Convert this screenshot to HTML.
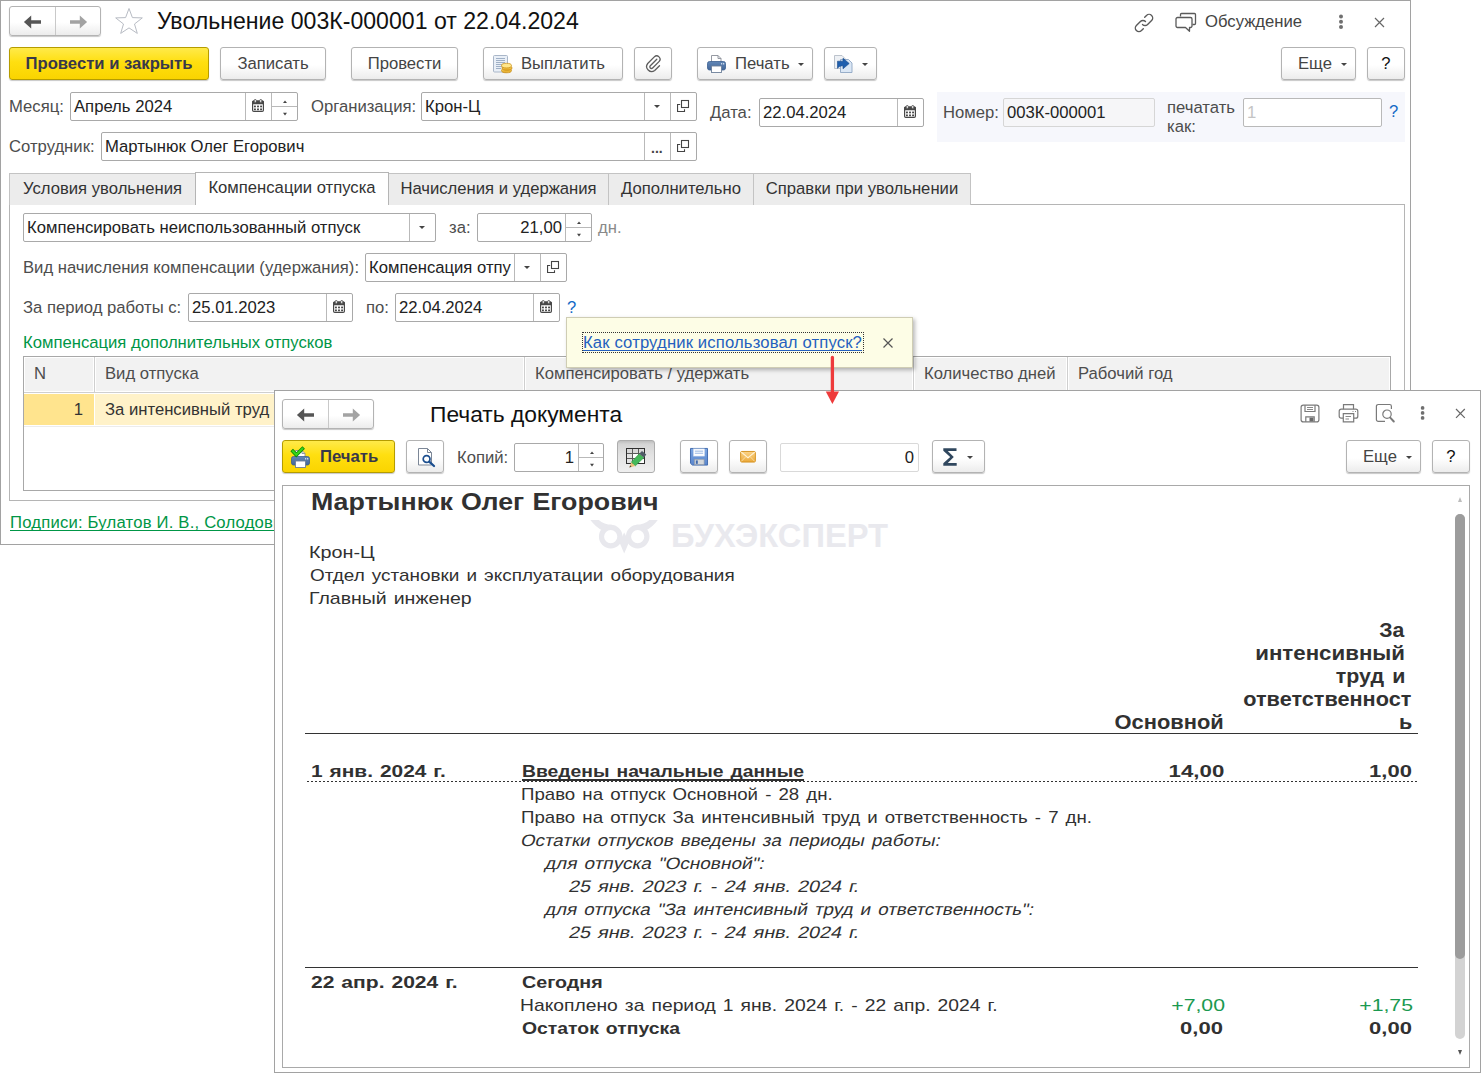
<!DOCTYPE html>
<html lang="ru">
<head>
<meta charset="utf-8">
<title>Увольнение</title>
<style>
*{box-sizing:border-box;margin:0;padding:0}
html,body{width:1481px;height:1073px;overflow:hidden;background:#fff}
body{font-family:"Liberation Sans",sans-serif;font-size:16.67px;color:#333;position:relative}
.a{position:absolute;white-space:nowrap}
.win{position:absolute;background:#fff;border:1px solid #a2a2a2}
.btn{position:absolute;height:33px;border:1px solid #b3b3b3;border-radius:3px;background:linear-gradient(#ffffff 0%,#ffffff 55%,#ececec 100%);box-shadow:0 1px 1px rgba(0,0,0,.22);color:#444;font-size:16.67px;line-height:31px;text-align:center;white-space:nowrap}
.ybtn{background:linear-gradient(#ffea4a 0%,#ffdf10 45%,#fad400 100%);border-color:#b59c00;font-weight:bold;color:#38384a}
.inp{position:absolute;height:29px;border:1px solid #a9a9a9;border-radius:2px;background:#fff;font-size:16.67px;line-height:27px;color:#222;white-space:nowrap;overflow:hidden}
.inp .t{position:absolute;left:3px;top:0}
.inp .r{position:absolute;right:4px;top:0}
.dv{position:absolute;top:0;bottom:0;width:1px;background:#b9b9b9}
.lbl{margin-top:1px;position:absolute;white-space:nowrap;font-size:16.67px;line-height:20px;color:#4d4d4d}
.tab{position:absolute;top:173px;height:32px;border:1px solid #c3c3c3;border-bottom:none;background:#ececec;font-size:16.67px;line-height:29px;text-align:center;color:#333;white-space:nowrap}
.tab.on{top:172px;height:33px;background:#fff;border-color:#b5b5b5;z-index:2;line-height:30px}
.caret{position:absolute;width:0;height:0;border-left:3px solid transparent;border-right:3px solid transparent;border-top:3px solid #444;margin:1px 0 0 1px}
svg{position:absolute;overflow:visible}
.ic{position:absolute}
.inp svg.cal{width:12px;height:13px;top:6px}
.inp svg.opn{width:13px;height:13px;top:6px}
.inp svg.spn{width:26px;height:27px;top:0}
.inp .car{position:absolute;top:12px;margin-left:0.300px;width:0;height:0;border-left:3.200px solid transparent;border-right:3.200px solid transparent;border-top:3.800px solid #444}

.doc{font-size:15px;color:#222}
.d{position:absolute;white-space:nowrap;line-height:20px}
</style>
</head>
<body>

<svg width="0" height="0" style="position:absolute;left:-10px;top:-10px">
<defs>
<linearGradient id="gBlue" x1="0" y1="0" x2="0" y2="1"><stop offset="0" stop-color="#6186b6"/><stop offset="1" stop-color="#43679a"/></linearGradient>
<linearGradient id="gGold" x1="0" y1="0" x2="0" y2="1"><stop offset="0" stop-color="#ffe27a"/><stop offset="1" stop-color="#e0a21a"/></linearGradient>
<linearGradient id="gEnv" x1="0" y1="0" x2="0" y2="1"><stop offset="0" stop-color="#fbd489"/><stop offset="1" stop-color="#eba93a"/></linearGradient>
<linearGradient id="gFlop" x1="0" y1="0" x2="0" y2="1"><stop offset="0" stop-color="#7ba6e3"/><stop offset="1" stop-color="#5a86cc"/></linearGradient>
<symbol id="cal" viewBox="0 0 12 13"><rect x="0.600" y="2.100" width="10.800" height="10.300" rx="1.200" fill="#fff" stroke="#484848" stroke-width="1.200"/><path d="M0 3 a1.500 1.500 0 0 1 1.500-1.500 h9 a1.500 1.500 0 0 1 1.500 1.500 v2.300 h-12 z" fill="#484848"/><rect x="2.300" y="0.400" width="1.900" height="3.300" rx="0.950" fill="#fff" stroke="#484848" stroke-width="0.800"/><rect x="7.800" y="0.400" width="1.900" height="3.300" rx="0.950" fill="#fff" stroke="#484848" stroke-width="0.800"/><g fill="#333"><rect x="2.100" y="6.600" width="1.700" height="1.700"/><rect x="5.150" y="6.600" width="1.700" height="1.700"/><rect x="8.200" y="6.600" width="1.700" height="1.700"/><rect x="2.100" y="9.500" width="1.700" height="1.700"/><rect x="5.150" y="9.500" width="1.700" height="1.700"/><rect x="8.200" y="9.500" width="1.700" height="1.700"/></g></symbol>
<symbol id="opn" viewBox="0 0 13 13"><rect x="4.500" y="1.500" width="7" height="7" fill="none" stroke="#444" stroke-width="1.100"/><path d="M3.200 5.500 H0.550 V12.500 H7.500 V10.200" fill="none" stroke="#444" stroke-width="1.100"/></symbol>
<symbol id="spn" viewBox="0 0 26 27"><path d="M11 10 L13 7.400 L15 10 Z" fill="#444"/><path d="M11 19.800 L13 22.400 L15 19.800 Z" fill="#444"/></symbol>
<symbol id="arrL" viewBox="0 0 20 14"><path d="M1 7 L8 1.300 L8 5.400 L18 5.400 L18 8.600 L8 8.600 L8 12.700 Z"/></symbol>
<symbol id="prn" viewBox="0 0 19 18"><path d="M4.500 0.500 h6.500 l3 3 v4.500 h-9.500 z" fill="#fff" stroke="#8a8f98" stroke-width="0.900"/><path d="M11 0.500 v3 h3" fill="none" stroke="#8a8f98" stroke-width="0.900"/><rect x="0.500" y="6.500" width="18" height="8.500" rx="2" fill="url(#gBlue)" stroke="#3b5f90" stroke-width="0.800"/><rect x="14" y="8.200" width="1.200" height="1.200" fill="#e8f0fb"/><rect x="16" y="8.200" width="1.200" height="1.200" fill="#e8f0fb"/><rect x="4.500" y="11" width="10" height="6.500" fill="#fff" stroke="#6d7f99" stroke-width="0.900"/></symbol>
</defs>
</svg>

<!-- ================= WINDOW 1 ================= -->
<div class="win" id="w1" style="left:0;top:0;width:1411px;height:545px"></div>
<!--W1START-->
<!-- nav buttons -->
<div class="btn" style="left:9px;top:6px;width:92px;height:30px"></div>
<div class="a" style="left:55px;top:7px;width:1px;height:28px;background:#c9c9c9"></div>
<svg style="left:23px;top:14.700px" width="20" height="14" viewBox="0 0 20 14"><path d="M0.900 7 L8.200 0.600 L8.200 5.350 L18 5.350 L18 8.650 L8.200 8.650 L8.200 13.400 Z" fill="#555"/></svg>
<svg style="left:68px;top:14.700px" width="20" height="14" viewBox="0 0 20 14"><path d="M19.100 7 L11.800 0.600 L11.800 5.350 L2 5.350 L2 8.650 L11.800 8.650 L11.800 13.400 Z" fill="#a3a3a3"/></svg>
<!-- star -->
<svg style="left:114px;top:7px" width="30" height="28" viewBox="0 0 30 28"><path d="M15 1.5 L18.4 10.6 L28.3 10.9 L20.5 17 L23.3 26.4 L15 20.9 L6.7 26.4 L9.5 17 L1.7 10.9 L11.6 10.6 Z" fill="#fff" stroke="#b8bcc4" stroke-width="1"/></svg>
<div class="a" style="left:157px;top:8px;font-size:23.1px;line-height:26px;color:#111">Увольнение 003К-000001 от 22.04.2024</div>

<!-- top-right icons -->
<svg style="left:1133px;top:12px" width="22" height="22" viewBox="0 0 22 22" fill="none" stroke="#5a5a5a" stroke-width="1.4" stroke-linecap="round"><path d="M9.5 12.5 a3.6 3.6 0 0 0 5.1 0 l4-4 a3.6 3.6 0 0 0-5.1-5.1 l-1.8 1.8"/><path d="M12.5 9.5 a3.6 3.6 0 0 0-5.1 0 l-4 4 a3.6 3.6 0 0 0 5.1 5.1 l1.8-1.8"/></svg>
<svg style="left:1175px;top:12px" width="24" height="22" viewBox="0 0 24 22" fill="none" stroke="#5a5a5a" stroke-width="1.3" stroke-linejoin="round"><path d="M5.5 4.5 V2.5 a1 1 0 0 1 1-1 h13 a1 1 0 0 1 1 1 v9 a1 1 0 0 1-1 1 h-2"/><path d="M2.500 5.500 h13 a1.500 1.500 0 0 1 1.500 1.500 v7 a1.500 1.500 0 0 1-1.500 1.500 h-1 v3.800 l-4-3.800 h-8 a1.500 1.500 0 0 1-1.500-1.500 v-7 a1.500 1.500 0 0 1 1.500-1.500 z" fill="#fff"/></svg>
<div class="a" style="left:1205px;top:12px;font-size:16.67px;line-height:20px;color:#444">Обсуждение</div>
<svg style="left:1337px;top:13px" width="8" height="18" viewBox="0 0 8 18"><circle cx="4" cy="3.500" r="2" fill="#6f6f6f"/><circle cx="4" cy="8.800" r="2" fill="#6f6f6f"/><circle cx="4" cy="14.100" r="2" fill="#6f6f6f"/></svg>
<svg style="left:1374px;top:17px" width="11" height="11" viewBox="0 0 11 11" stroke="#666" stroke-width="1.2"><path d="M1 1 L10 10 M10 1 L1 10"/></svg>

<!-- command bar -->
<div class="btn ybtn" style="left:9px;top:47px;width:200px">Провести и закрыть</div>
<div class="btn" style="left:220px;top:47px;width:106px">Записать</div>
<div class="btn" style="left:351px;top:47px;width:107px">Провести</div>
<div class="btn" style="left:483px;top:47px;width:140px;text-align:left;padding-left:37px">Выплатить</div>
<div class="btn" style="left:634px;top:47px;width:38px"></div>
<div class="btn" style="left:697px;top:47px;width:116px;text-align:left;padding-left:37px">Печать</div>
<div class="caret" style="left:797px;top:62px"></div>
<div class="btn" style="left:824px;top:47px;width:53px"></div>
<div class="caret" style="left:861px;top:62px"></div>
<div class="btn" style="left:1281px;top:47px;width:75px;text-align:left;padding-left:16px">Еще</div>
<div class="caret" style="left:1340px;top:62px"></div>
<div class="btn" style="left:1367px;top:47px;width:38px;color:#111">?</div>

<!-- row 1 -->
<div class="lbl" style="left:9px;top:96px">Месяц:</div>
<div class="inp" style="left:70px;top:92px;width:228px"><span class="t">Апрель 2024</span><i class="dv" style="left:174px"></i><svg class="cal" style="left:181px"><use href="#cal"/></svg><svg class="spn" style="left:201px"><use href="#spn"/></svg><i class="dv" style="left:200px"></i><i class="a" style="left:201px;top:13px;width:26px;height:1px;background:#b9b9b9"></i></div>
<div class="lbl" style="left:311px;top:96px">Организация:</div>
<div class="inp" style="left:421px;top:92px;width:276px"><span class="t">Крон-Ц</span><i class="dv" style="left:222px"></i><i class="dv" style="left:248px"></i><i class="car" style="left:232px"></i><svg class="opn" style="left:255px"><use href="#opn"/></svg></div>
<div class="lbl" style="left:710px;top:102px">Дата:</div>
<div class="inp" style="left:759px;top:98px;width:165px"><span class="t">22.04.2024</span><i class="dv" style="left:137px"></i><svg class="cal" style="left:144px"><use href="#cal"/></svg></div>
<div class="a" style="left:937px;top:92px;width:468px;height:50px;background:#f6f7fc"></div>
<div class="lbl" style="left:943px;top:102px">Номер:</div>
<div class="inp" style="left:1003px;top:98px;width:152px;background:#f6f6f8;border-color:#d6d6d6"><span class="t">003К-000001</span></div>
<div class="lbl" style="left:1167px;top:97px;line-height:19px;white-space:normal;width:75px">печатать как:</div>
<div class="inp" style="left:1243px;top:98px;width:139px;border-color:#b9b9b9"><span class="t" style="color:#c4c4c4">1</span></div>
<div class="a" style="left:1389px;top:102px;font-size:16.67px;line-height:20px;color:#146ac6">?</div>

<!-- row 2 -->
<div class="lbl" style="left:9px;top:136px">Сотрудник:</div>
<div class="inp" style="left:101px;top:132px;width:596px"><span class="t">Мартынюк Олег Егорович</span><i class="dv" style="left:542px"></i><i class="dv" style="left:568px"></i><svg class="opn" style="left:575px"><use href="#opn"/></svg><span class="a" style="left:549px;top:2px;font-size:14px;font-weight:bold;color:#444;letter-spacing:0px">...</span></div>

<!-- tabs -->
<div class="a" style="left:9px;top:204px;width:1396px;height:297px;border:1px solid #b5b5b5;background:#fff"></div>
<div class="tab" style="left:9px;width:187px">Условия увольнения</div>
<div class="tab on" style="left:195px;width:194px">Компенсации отпуска</div>
<div class="tab" style="left:388px;width:221px">Начисления и удержания</div>
<div class="tab" style="left:608px;width:146px">Дополнительно</div>
<div class="tab" style="left:753px;width:218px">Справки при увольнении</div>

<!-- panel content -->
<div class="inp" style="left:23px;top:213px;width:413px"><span class="t">Компенсировать неиспользованный отпуск</span><i class="dv" style="left:385px"></i><i class="car" style="left:395px"></i></div>
<div class="lbl" style="left:449px;top:217px">за:</div>
<div class="inp" style="left:477px;top:213px;width:115px"><span class="a" style="right:29px;top:0">21,00</span><i class="dv" style="left:87px"></i><svg class="spn" style="left:88px"><use href="#spn"/></svg><i class="a" style="left:88px;top:13px;width:26px;height:1px;background:#b9b9b9"></i></div>
<div class="lbl" style="left:598px;top:217px;color:#8a8a8a">дн.</div>

<div class="lbl" style="left:23px;top:257px">Вид начисления компенсации (удержания):</div>
<div class="inp" style="left:365px;top:253px;width:202px"><span class="t" style="width:144px;overflow:hidden">Компенсация отпу</span><i class="dv" style="left:148px"></i><i class="dv" style="left:174px"></i><i class="car" style="left:158px"></i><svg class="opn" style="left:181px"><use href="#opn"/></svg></div>

<div class="lbl" style="left:23px;top:297px">За период работы с:</div>
<div class="inp" style="left:188px;top:293px;width:165px"><span class="t">25.01.2023</span><i class="dv" style="left:137px"></i><svg class="cal" style="left:144px"><use href="#cal"/></svg></div>
<div class="lbl" style="left:366px;top:297px">по:</div>
<div class="inp" style="left:395px;top:293px;width:165px"><span class="t">22.04.2024</span><i class="dv" style="left:137px"></i><svg class="cal" style="left:144px"><use href="#cal"/></svg></div>
<div class="a" style="left:567px;top:298px;font-size:16.67px;line-height:20px;color:#146ac6">?</div>

<div class="a" style="left:23px;top:333px;font-size:16.67px;line-height:20px;color:#009646">Компенсация дополнительных отпусков</div>

<!-- table -->
<div class="a" style="left:23px;top:356px;width:1368px;height:135px;border:1px solid #a8a8a8;background:#fff"></div>
<div class="a" style="left:25px;top:358px;width:68px;height:33px;background:#f2f2f2"></div>
<div class="a" style="left:96px;top:358px;width:427px;height:33px;background:#f2f2f2"></div>
<div class="a" style="left:526px;top:358px;width:386px;height:33px;background:#f2f2f2"></div>
<div class="a" style="left:915px;top:358px;width:151px;height:33px;background:#f2f2f2"></div>
<div class="a" style="left:1069px;top:358px;width:320px;height:33px;background:#f2f2f2"></div>
<i class="a" style="left:24px;top:392px;width:1366px;height:1px;background:#cfcfcf"></i>
<i class="a" style="left:94px;top:357px;width:1px;height:36px;background:#cfcfcf"></i>
<i class="a" style="left:524px;top:357px;width:1px;height:36px;background:#cfcfcf"></i>
<i class="a" style="left:913px;top:357px;width:1px;height:36px;background:#cfcfcf"></i>
<i class="a" style="left:1067px;top:357px;width:1px;height:36px;background:#cfcfcf"></i>
<div class="lbl" style="left:34px;top:363px">N</div>
<div class="lbl" style="left:105px;top:363px">Вид отпуска</div>
<div class="lbl" style="left:535px;top:363px">Компенсировать / удержать</div>
<div class="lbl" style="left:924px;top:363px">Количество дней</div>
<div class="lbl" style="left:1078px;top:363px">Рабочий год</div>
<div class="a" style="left:24px;top:394px;width:70px;height:31px;background:#ffe48e"></div>
<div class="a" style="left:95px;top:394px;width:1295px;height:31px;background:#fff2c9"></div>
<i class="a" style="left:24px;top:426px;width:1366px;height:1px;background:#ececec"></i>
<div class="a" style="left:24px;top:400px;width:59px;text-align:right;font-size:16.67px;line-height:20px;color:#333">1</div>
<div class="a" style="left:105px;top:400px;font-size:16.67px;line-height:20px;color:#333">За интенсивный труд и ответственность</div>

<div class="a" style="left:10px;top:513px;font-size:16.67px;line-height:20px;letter-spacing:0.2px;color:#009646;text-decoration:underline;text-decoration-skip-ink:none;text-underline-offset:2px">Подписи: Булатов И. В., Солодовников</div>

<!-- tooltip -->
<div class="a" style="left:566px;top:317px;width:347px;height:51px;background:#fdfde6;border:1px solid #cfcdb4;box-shadow:2px 2px 4px rgba(0,0,0,.28);z-index:5"></div>
<div class="a" style="left:582px;top:332px;width:282px;height:21px;border:1px dotted #333;z-index:6"></div>
<div class="a" style="left:583px;top:333px;font-size:16.67px;line-height:20px;letter-spacing:0.14px;color:#2460bf;text-decoration:underline;text-decoration-skip-ink:none;text-underline-offset:2px;z-index:6">Как сотрудник использовал отпуск?</div>
<svg style="left:883px;top:338px;z-index:6" width="10" height="10" viewBox="0 0 10 10" stroke="#555" stroke-width="1.200"><path d="M0.500 0.500 L9.500 9.500 M9.500 0.500 L0.500 9.500"/></svg>
<!--W1END-->

<!-- ================= WINDOW 2 ================= -->
<div class="win" id="w2" style="left:274px;top:390px;width:1207px;height:683px"></div>
<!--W2START-->
<!-- nav -->
<div class="btn" style="left:282px;top:399px;width:92px;height:30px"></div>
<div class="a" style="left:328px;top:400px;width:1px;height:28px;background:#c9c9c9"></div>
<svg style="left:296px;top:407.500px" width="20" height="14" viewBox="0 0 20 14"><path d="M0.900 7 L8.200 0.600 L8.200 5.350 L18 5.350 L18 8.650 L8.200 8.650 L8.200 13.400 Z" fill="#555"/></svg>
<svg style="left:341px;top:407.500px" width="20" height="14" viewBox="0 0 20 14"><path d="M19.100 7 L11.800 0.600 L11.800 5.350 L2 5.350 L2 8.650 L11.800 8.650 L11.800 13.400 Z" fill="#a3a3a3"/></svg>
<div class="a" style="left:430px;top:401px;font-size:22.8px;line-height:26px;color:#111">Печать документа</div>

<!-- top-right icons -->
<svg style="left:1300px;top:404px" width="20" height="19" viewBox="0 0 20 19" fill="none" stroke="#7a7a7a" stroke-width="1.200"><rect x="1.100" y="1.100" width="17.800" height="16.800" rx="2.200"/><path d="M5 1.200 v6.300 h10 v-6.300"/><path d="M7 3.500 h6 M7 5.500 h6" stroke-width="0.900"/><path d="M5.800 17.800 v-5 h8.400 v5"/><rect x="9.500" y="13.600" width="4" height="3.800" fill="#6a6a6a" stroke="none"/></svg>
<svg style="left:1338px;top:403px" width="21" height="20" viewBox="0 0 21 20" fill="none" stroke="#7a7a7a" stroke-width="1.200"><path d="M5.500 6.200 v-4.600 h10 v4.600"/><path d="M5.200 15.200 h-2 a2 2 0 0 1-2-2 v-5 a2 2 0 0 1 2-2 h14.600 a2 2 0 0 1 2 2 v5 a2 2 0 0 1-2 2 h-2"/><path d="M5.300 10.600 h10.400 v8.300 h-10.400 z"/><path d="M7.500 13.500 h5.500 M7.500 16 h3.500 M14.500 8.500 h1 M17 8.500 h1" stroke-width="0.900"/></svg>
<svg style="left:1375px;top:403px" width="21" height="20" viewBox="0 0 21 20" fill="none" stroke="#7a7a7a" stroke-width="1.200"><path d="M10 18.300 h-6.800 a1.800 1.800 0 0 1-1.800-1.800 v-13.200 a1.800 1.800 0 0 1 1.800-1.800 h11.400 a1.800 1.800 0 0 1 1.800 1.800 v2.700"/><circle cx="12" cy="11.200" r="4.200"/><path d="M15.200 14.600 l3.600 3.900" stroke-width="2" stroke-linecap="round"/></svg>
<svg style="left:1418px;top:404px" width="9" height="18" viewBox="0 0 9 18"><circle cx="4.600" cy="3.900" r="1.850" fill="#6f6f6f"/><circle cx="4.600" cy="8.900" r="1.850" fill="#6f6f6f"/><circle cx="4.600" cy="13.900" r="1.850" fill="#6f6f6f"/></svg>
<svg style="left:1455px;top:408px" width="11" height="11" viewBox="0 0 11 11" stroke="#666" stroke-width="1.200"><path d="M1 1 L9.800 9.800 M9.800 1 L1 9.800"/></svg>

<!-- command bar -->
<div class="btn ybtn" style="left:282px;top:440px;width:113px;text-align:left;padding-left:37px">Печать</div>
<div class="btn" style="left:406px;top:440px;width:38px"></div>
<div class="lbl" style="left:457px;top:447px">Копий:</div>
<div class="inp" style="left:514px;top:443px;width:90px"><span class="a" style="right:29px;top:0">1</span><i class="dv" style="left:63px"></i><svg class="spn" style="left:64px"><use href="#spn"/></svg><i class="a" style="left:64px;top:13px;width:26px;height:1px;background:#b9b9b9"></i></div>
<div class="btn" style="left:617px;top:440px;width:38px;background:linear-gradient(#bdbdbd 0%,#d4d4d4 10%,#e2e2e2 45%,#efefef 100%);border-color:#adadad;box-shadow:none"></div>
<div class="btn" style="left:680px;top:440px;width:38px"></div>
<div class="btn" style="left:729px;top:440px;width:38px"></div>
<div class="inp" style="left:780px;top:443px;width:139px;border-color:#d9d9d9"><span class="a" style="right:4px;top:0">0</span></div>
<div class="btn" style="left:932px;top:440px;width:53px"></div>
<div class="caret" style="left:966px;top:455px"></div>
<div class="btn" style="left:1346px;top:440px;width:75px;text-align:left;padding-left:16px">Еще</div>
<div class="caret" style="left:1405px;top:455px"></div>
<div class="btn" style="left:1432px;top:440px;width:38px;color:#111">?</div>

<!-- document area -->
<div class="a" style="left:282px;top:485px;width:1188px;height:583px;border:1px solid #a9a9a9;background:#fff"></div>
<!-- scrollbar -->
<div class="a" style="left:1455px;top:514px;width:10px;height:525px;background:#d3d3d3;border-radius:5px"></div>
<div class="a" style="left:1455px;top:514px;width:10px;height:445px;background:#9c9c9c;border-radius:5px"></div>
<div class="a" style="left:1458px;top:497px;width:0;height:0;border-left:2.500px solid transparent;border-right:2.500px solid transparent;border-bottom:5px solid #bdbdbd"></div>
<div class="a" style="left:1458px;top:1050px;width:0;height:0;border-left:2.500px solid transparent;border-right:2.500px solid transparent;border-top:5px solid #555"></div>
<!-- watermark -->
<svg style="left:588px;top:518px" width="72" height="38" viewBox="588 518 72 38"><g fill="#e8e8ed"><circle cx="610.700" cy="536.600" r="9.200" fill="none" stroke="#e8e8ed" stroke-width="5.200"/><circle cx="637.700" cy="536.600" r="9.200" fill="none" stroke="#e8e8ed" stroke-width="5.200"/><path d="M590.400 520 L598.800 520 Q604 524.800 612 524.800 L602.500 530.500 Q595.500 527 590.400 520 Z"/><path d="M657.800 520 L649.400 520 Q644.200 524.800 636.200 524.800 L645.700 530.500 Q652.700 527 657.800 520 Z"/><path d="M619.300 542 L624.200 553.400 L629.100 542 L624.200 532.500 Z"/></g></svg>
<div class="a" style="left:671px;top:517px;font-size:33.5px;line-height:38px;font-weight:bold;color:#e9e9ee;transform:scaleX(.976);transform-origin:0 0">БУХЭКСПЕРТ</div>
<!--DOC-->
<div class="a" style="left:305px;top:733px;width:1113px;height:1px;background:#333"></div>
<div class="a" style="left:307px;top:781px;width:1111px;height:1px;background:repeating-linear-gradient(90deg,#333 0,#333 2px,transparent 2px,transparent 4px)"></div>
<div class="a" style="left:305px;top:967px;width:1113px;height:1px;background:#333"></div>
<div class="d" style="left:311.41px;transform-origin:0 18px;top:492px;font-size:23.2px;font-weight:bold;color:#313131;word-spacing:0.66px;transform:scaleX(1.1543)">Мартынюк Олег Егорович</div>
<div class="d" style="left:309.2px;transform-origin:0 15px;top:543px;font-size:16.6px;color:#313131;word-spacing:0px;transform:scaleX(1.1934)">Крон-Ц</div>
<div class="d" style="left:310.1px;transform-origin:0 15px;top:566px;font-size:16.6px;color:#313131;word-spacing:1.6px;transform:scaleX(1.1404)">Отдел установки и эксплуатации оборудования</div>
<div class="d" style="left:309.2px;transform-origin:0 15px;top:589px;font-size:16.6px;color:#313131;word-spacing:1.38px;transform:scaleX(1.1746)">Главный инженер</div>
<div class="d" style="right:257.36px;transform-origin:100% 17px;top:712px;font-size:19.8px;font-weight:bold;color:#313131;word-spacing:0px;transform:scaleX(1.1063)">Основной</div>
<div class="d" style="right:76.68px;transform-origin:100% 17px;top:620px;font-size:19.8px;font-weight:bold;color:#313131;word-spacing:0px;transform:scaleX(1.0728)">За</div>
<div class="d" style="right:75.94px;transform-origin:100% 17px;top:643px;font-size:19.8px;font-weight:bold;color:#313131;word-spacing:0px;transform:scaleX(1.1261)">интенсивный</div>
<div class="d" style="right:75.94px;transform-origin:100% 17px;top:666px;font-size:19.8px;font-weight:bold;color:#313131;word-spacing:2.07px;transform:scaleX(1.0814)">труд и</div>
<div class="d" style="right:69.42px;transform-origin:100% 17px;top:689px;font-size:19.8px;font-weight:bold;color:#313131;word-spacing:0px;transform:scaleX(1.096)">ответственност</div>
<div class="d" style="right:68.52px;transform-origin:100% 17px;top:712px;font-size:19.8px;font-weight:bold;color:#313131;word-spacing:0px;transform:scaleX(1.091)">ь</div>
<div class="d" style="left:311.15px;transform-origin:0 15px;top:762px;font-size:16.9px;font-weight:bold;color:#313131;word-spacing:0.89px;transform:scaleX(1.2376)">1 янв. 2024 г.</div>
<div class="d" style="left:521.89px;transform-origin:0 15px;top:762px;font-size:16.9px;font-weight:bold;color:#313131;text-decoration:underline;text-underline-offset:1.5px;text-decoration-thickness:2px;text-decoration-skip-ink:none;word-spacing:1.45px;transform:scaleX(1.1435)">Введены начальные данные</div>
<div class="d" style="right:257.15px;transform-origin:100% 15px;top:762px;font-size:16.9px;font-weight:bold;color:#313131;word-spacing:0px;transform:scaleX(1.3174)">14,00</div>
<div class="d" style="right:69.05px;transform-origin:100% 15px;top:762px;font-size:16.9px;font-weight:bold;color:#313131;word-spacing:0px;transform:scaleX(1.3019)">1,00</div>
<div class="d" style="left:521.15px;transform-origin:0 15px;top:785px;font-size:16.6px;color:#313131;word-spacing:1.71px;transform:scaleX(1.1245)">Право на отпуск Основной - 28 дн.</div>
<div class="d" style="left:521.15px;transform-origin:0 15px;top:808px;font-size:16.6px;color:#313131;word-spacing:1.71px;transform:scaleX(1.1245)">Право на отпуск За интенсивный труд и ответственность - 7 дн.</div>
<div class="d" style="left:520.41px;transform-origin:0 15px;top:831px;font-size:16.6px;color:#313131;word-spacing:1.68px;transform:scaleX(1.1292) skewX(-11.5deg)">Остатки отпусков введены за периоды работы:</div>
<div class="d" style="left:544.05px;transform-origin:0 15px;top:854px;font-size:16.6px;color:#313131;word-spacing:1.58px;transform:scaleX(1.1445) skewX(-11.5deg)">для отпуска &quot;Основной&quot;:</div>
<div class="d" style="left:568.15px;transform-origin:0 15px;top:877px;font-size:16.6px;color:#313131;word-spacing:1.27px;transform:scaleX(1.1911) skewX(-11.5deg)">25 янв. 2023 г. - 24 янв. 2024 г.</div>
<div class="d" style="left:544.05px;transform-origin:0 15px;top:900px;font-size:16.6px;color:#313131;word-spacing:1.66px;transform:scaleX(1.1328) skewX(-11.5deg)">для отпуска &quot;За интенсивный труд и ответственность&quot;:</div>
<div class="d" style="left:568.15px;transform-origin:0 15px;top:923px;font-size:16.6px;color:#313131;word-spacing:1.27px;transform:scaleX(1.1911) skewX(-11.5deg)">25 янв. 2023 г. - 24 янв. 2024 г.</div>
<div class="d" style="left:311.31px;transform-origin:0 15px;top:973px;font-size:16.9px;font-weight:bold;color:#313131;word-spacing:0.83px;transform:scaleX(1.248)">22 апр. 2024 г.</div>
<div class="d" style="left:521.89px;transform-origin:0 15px;top:973px;font-size:16.9px;font-weight:bold;color:#313131;word-spacing:0px;transform:scaleX(1.1655)">Сегодня</div>
<div class="d" style="left:520.25px;transform-origin:0 15px;top:996px;font-size:16.6px;color:#313131;word-spacing:1.46px;transform:scaleX(1.1619)">Накоплено за период 1 янв. 2024 г. - 22 апр. 2024 г.</div>
<div class="d" style="right:256.31px;transform-origin:100% 15px;top:996px;font-size:16.6px;color:#1a9950;word-spacing:0px;transform:scaleX(1.2798)">+7,00</div>
<div class="d" style="right:67.89px;transform-origin:100% 15px;top:996px;font-size:16.6px;color:#1a9950;word-spacing:0px;transform:scaleX(1.2798)">+1,75</div>
<div class="d" style="left:521.89px;transform-origin:0 15px;top:1019px;font-size:16.9px;font-weight:bold;color:#313131;word-spacing:1.43px;transform:scaleX(1.1465)">Остаток отпуска</div>
<div class="d" style="right:258.05px;transform-origin:100% 15px;top:1019px;font-size:16.9px;font-weight:bold;color:#313131;word-spacing:0px;transform:scaleX(1.3034)">0,00</div>
<div class="d" style="right:69.05px;transform-origin:100% 15px;top:1019px;font-size:16.9px;font-weight:bold;color:#313131;word-spacing:0px;transform:scaleX(1.3034)">0,00</div>
<!-- ICONS -->
<!-- Выплатить: doc + coins -->
<svg style="left:493px;top:55px" width="20" height="19" viewBox="0 0 20 19"><rect x="0.500" y="0.500" width="14" height="16.500" rx="1" fill="#e9eff7" stroke="#a9b6c8" stroke-width="1"/><g stroke="#9fb0c6" stroke-width="1"><path d="M3 3.500 h9 M3 5.500 h9 M3 7.500 h9 M3 9.500 h9 M3 11.500 h6 M3 13.500 h5"/></g><ellipse cx="13.500" cy="15.500" rx="5" ry="2.300" fill="url(#gGold)" stroke="#c58a12" stroke-width="0.700"/><ellipse cx="14" cy="13" rx="5" ry="2.300" fill="url(#gGold)" stroke="#c58a12" stroke-width="0.700"/><ellipse cx="13.500" cy="10.600" rx="5" ry="2.300" fill="#ffe68a" stroke="#c58a12" stroke-width="0.700"/></svg>
<!-- clip -->
<svg style="left:644px;top:54px" width="18" height="18" viewBox="0 0 18 18" fill="none" stroke="#5c5c5c" stroke-width="1.300" stroke-linecap="round" stroke-linejoin="round"><path d="M12.800 5.200 L6.300 11.700 a1.600 1.600 0 0 0 2.300 2.300 L15 7.600 a3.300 3.300 0 0 0-4.700-4.700 L3.700 9.500 a5 5 0 0 0 7 7 L15.500 11.800"/></svg>
<!-- printer (Печать) -->
<svg style="left:707px;top:55px" width="19" height="18"><use href="#prn"/></svg>
<!-- export icon -->
<svg style="left:834px;top:55px" width="19" height="18" viewBox="0 0 19 18"><path d="M0.500 0.500 h7.500 l3 3 v10 h-10.500 z" fill="#eef1f5" stroke="#b5bcc6" stroke-width="0.900"/><path d="M6.500 4.500 h8 l3.500 3.500 v9.500 h-11.500 z" fill="#dbe7f5" stroke="#8fa6c4" stroke-width="0.900"/><path d="M3.500 6.200 h5.500 v-3 l6.200 5.300 l-6.200 5.300 v-3 c-2.500 0-4 .8-5.500 2.500 z" fill="#1f5fae" stroke="#174a8a" stroke-width="0.600" stroke-linejoin="round"/></svg>
<!-- yellow print icon -->
<svg style="left:291px;top:449.500px" width="19" height="18"><use href="#prn"/></svg>
<svg style="left:290px;top:446px" width="16" height="12" viewBox="0 0 16 12"><path d="M2.900 5.200 L6.300 8.800 L12.400 2.700" fill="none" stroke="#0e8a06" stroke-width="3.600" stroke-linecap="square" stroke-linejoin="miter"/><path d="M2.900 5.200 L6.300 8.800 L12.400 2.700" fill="none" stroke="#35d61a" stroke-width="2" stroke-linecap="square" stroke-linejoin="miter"/></svg>
<!-- preview -->
<svg style="left:418px;top:448px" width="18" height="19" viewBox="0 0 18 19"><path d="M0.500 0.500 h9 l4 4 v12.500 h-13 z" fill="#fff" stroke="#7c8797" stroke-width="1"/><path d="M9.500 0.500 v4 h4" fill="none" stroke="#7c8797" stroke-width="1"/><circle cx="8.600" cy="11" r="3.400" fill="#fff" stroke="#1c4f8f" stroke-width="1.700"/><path d="M11.200 13.700 L16 18" stroke="#1c4f8f" stroke-width="2.300" stroke-linecap="round"/></svg>
<!-- table edit -->
<svg style="left:626px;top:448px" width="22" height="20" viewBox="0 0 22 20"><rect x="0.500" y="0.500" width="18" height="15" fill="#fff" stroke="#2e2e2e" stroke-width="1"/><rect x="1" y="1" width="17" height="4.500" fill="#d9d9d9"/><rect x="1" y="5.500" width="5" height="9.500" fill="#e2e2e2"/><path d="M1 5.500 h17 M1 10.500 h17 M6.500 1 v14 M12.500 1 v14" stroke="#5a5a5a" stroke-width="1" fill="none"/><rect x="0.500" y="0.500" width="18" height="15" fill="none" stroke="#2e2e2e" stroke-width="1"/><path d="M13.200 5.800 L18 9.600 L9.200 18 L5.200 14.200 Z" fill="#45b85a" stroke="#2f8f41" stroke-width="0.500"/><path d="M13.200 5.800 L16 3 L20.300 6.600 L18 9.600 Z" fill="#4f5b66"/><path d="M5.200 14.200 L9.200 18 L3.400 19.400 Z" fill="#efbf78"/><path d="M3.400 19.400 L4.200 17.300 L5.500 18.800 Z" fill="#444"/></svg>
<!-- floppy -->
<svg style="left:690px;top:448px" width="18.500" height="18" viewBox="0 0 19 20" preserveAspectRatio="none"><path d="M0.500 0.500 h17.500 v18.500 h-15.500 l-2-2 z" fill="url(#gFlop)" stroke="#3f69ad" stroke-width="1"/><rect x="3.500" y="1" width="11.500" height="8" fill="#fff" stroke="#c9d6ea" stroke-width="0.600"/><path d="M5 3.500 h8.500 M5 5.800 h8.500" stroke="#8fb0e0" stroke-width="1"/><rect x="4.500" y="12.500" width="10" height="6" fill="#d4d8dc" stroke="#8e98a6" stroke-width="0.700"/><rect x="6" y="13.800" width="2" height="3.800" fill="#3f69ad"/></svg>
<!-- mail -->
<svg style="left:740px;top:451px" width="16" height="12" viewBox="0 0 17 13"><rect x="0.500" y="0.500" width="16" height="11.500" rx="1.300" fill="url(#gEnv)" stroke="#d48f1a" stroke-width="1"/><path d="M1.200 1.200 L8.500 7.300 L15.800 1.200" fill="none" stroke="#fff4d8" stroke-width="1.100"/><path d="M1.200 11.300 L6.300 6 M15.800 11.300 L10.700 6" fill="none" stroke="#fbe2ac" stroke-width="0.900"/></svg>
<!-- sigma -->
<svg style="left:943px;top:448px" width="14" height="18" viewBox="0 0 14 18"><path d="M13.500 0.200 H0.300 V2.700 L7.200 9 L0.300 15.300 V17.800 H13.700 V15 H4.800 L10.800 9 L4.800 3 H13.500 Z" fill="#30475e"/></svg>
<!-- END ICONS -->
<!-- red arrow -->
<svg style="left:824px;top:354px;z-index:20" width="18" height="52" viewBox="824 354 18 52"><path d="M832.400 357.500 V394" stroke="#ee3b3b" stroke-width="3.300" stroke-linecap="round" fill="none"/><path d="M825.800 391.400 H839 L832.400 404 Z" fill="#ee3b3b"/></svg>
<!--W2END-->

</body>
</html>
